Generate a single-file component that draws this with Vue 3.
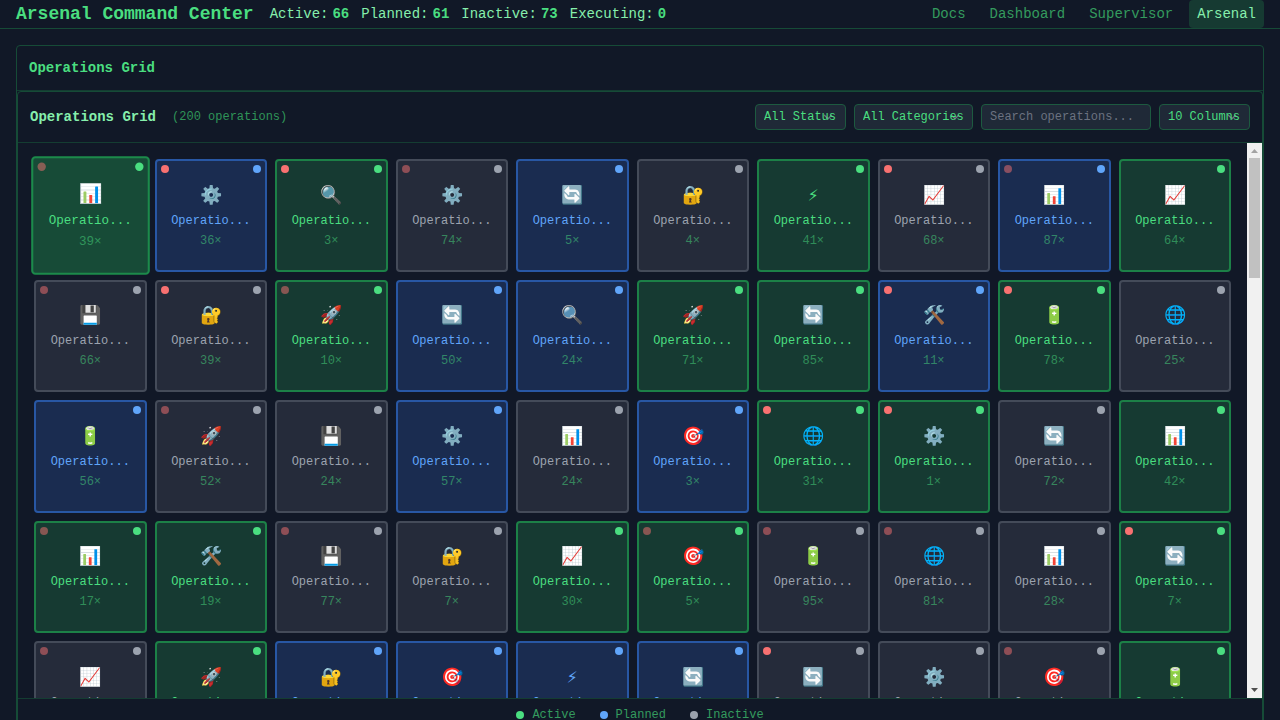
<script setup>
import { computed, ref } from 'vue'

const icons = {
  b: '📊', g: '⚙️', s: '🔍', r: '🔄', l: '🔐', z: '⚡', u: '📈',
  d: '💾', k: '🚀', t: '🛠️', y: '🔋', w: '🌐', o: '🎯'
}
const states = { a: 'active', p: 'planned', i: 'inactive' }
const alerts = { '-': '', h: 'high', m: 'muted' }

// Each entry: icon, state, alert level, run count
const rows = [
  'bam39 gph36 sah3 gim74 rp-5 li-4 za-41 uih68 bpm87 ua-64',
  'dim66 lih39 kam10 rp-50 sp-24 ka-71 ra-85 tph11 yah78 wi-25',
  'yp-56 kim52 di-24 gp-57 bi-24 op-3 wah31 gah1 ri-72 ba-42',
  'bam17 ta-19 dim77 li-7 ua-30 oam5 yim95 wim81 bi-28 rah7',
  'uim12 ka-33 lp-48 op-9 zp-62 rp-27 rih54 gi-18 oim70 ya-46'
]
const operations = rows.join(' ').split(' ').map((code, n) => ({
  id: n,
  label: 'Operatio...',
  icon: icons[code[0]],
  state: states[code[1]],
  alert: alerts[code[2]],
  runs: Number(code.slice(3))
}))

const status = ref('all')
const columns = ref(10)
const search = ref('')
const visible = computed(() =>
  operations.filter(op =>
    (status.value === 'all' || op.state === status.value) &&
    op.label.toLowerCase().includes(search.value.toLowerCase())
  )
)

const stats = [
  ['Active', 66], ['Planned', 61], ['Inactive', 73], ['Executing', 0]
]
const links = ['Docs', 'Dashboard', 'Supervisor', 'Arsenal']
</script>

<template>
  <div class="app">
    <header class="topbar">
      <h1>Arsenal Command Center</h1>
      <div class="stats">
        <span v-for="[name, value] in stats" :key="name" class="stat">
          <span>{{ name }}:</span><b>{{ value }}</b>
        </span>
      </div>
      <nav>
        <a v-for="link in links" :key="link" href="#" :class="{ current: link === 'Arsenal' }">{{ link }}</a>
      </nav>
    </header>

    <main>
      <section class="panel">
        <h2 class="panel-title">Operations Grid</h2>
        <div class="board">
          <div class="toolbar">
            <h3>Operations Grid</h3>
            <span class="total">(200 operations)</span>
            <div class="filters">
              <select v-model="status" aria-label="Status">
                <option value="all">All Status</option>
                <option value="active">Active</option>
                <option value="planned">Planned</option>
                <option value="inactive">Inactive</option>
              </select>
              <select aria-label="Category">
                <option>All Categories</option>
              </select>
              <input v-model="search" type="text" placeholder="Search operations..." aria-label="Search operations">
              <select v-model="columns" aria-label="Columns">
                <option :value="10">10 Columns</option>
              </select>
            </div>
          </div>

          <div class="viewport">
            <div class="scroller">
              <div class="grid">
                <button
                  v-for="op in visible"
                  :key="op.id"
                  type="button"
                  class="card"
                  :class="[op.state, { focused: op.id === 0 }]"
                >
                  <span v-if="op.alert" class="dot alert" :class="op.alert"></span>
                  <span class="dot state"></span>
                  <span class="icon">{{ op.icon }}</span>
                  <span class="name">{{ op.label }}</span>
                  <span class="runs">{{ op.runs }}×</span>
                </button>
              </div>
            </div>
            <div class="rail" aria-hidden="true">
              <svg class="arrow" viewBox="0 0 15 15"><path d="M4 10L7.500 6L11 10Z" fill="#a3a3a3" /></svg>
              <div class="track"><div class="thumb"></div></div>
              <svg class="arrow" viewBox="0 0 15 15"><path d="M4 5L11 5L7.500 9Z" fill="#505050" /></svg>
            </div>
          </div>

          <footer class="legend">
            <span class="active"><i class="dot"></i>Active</span>
            <span class="planned"><i class="dot"></i>Planned</span>
            <span class="inactive"><i class="dot"></i>Inactive</span>
          </footer>
        </div>
      </section>
    </main>
  </div>
</template>

<style>
body {
  margin: 0;
  background: #111827;
}
</style>

<style scoped>
* {
  box-sizing: border-box;
}
.app {
  display: flex;
  flex-direction: column;
  height: 100vh;
  overflow: hidden;
  background: #111827;
  color: #4ade80;
  font-family: "Liberation Mono", monospace;
  font-size: 14px;
  line-height: 20px;
}
h1, h2, h3 {
  margin: 0;
  font-weight: 700;
}
.topbar {
  display: flex;
  align-items: center;
  flex-shrink: 0;
  padding: 0 16px;
  border-bottom: 1px solid #164b37;
}
h1 {
  font-size: 18px;
  line-height: 28px;
}
.stats {
  display: flex;
  gap: 12px;
  margin-left: 16px;
  color: #86efac;
}
.stat {
  display: flex;
  gap: 4px;
}
.stat b {
  color: #4ade80;
}
nav {
  display: flex;
  gap: 8px;
  margin-left: auto;
}
nav a {
  padding: 4px 8px;
  border-radius: 4px;
  color: #349b5e;
  text-decoration: none;
}
nav a.current {
  background: #163a32;
  color: #86efac;
}
main {
  flex: 1;
  min-height: 0;
  padding: 16px;
}
.panel {
  border: 1px solid #164b37;
  border-radius: 4px;
}
.panel-title {
  padding: 12px;
  border-bottom: 1px solid #143d32;
  font-size: 14px;
}
.board {
  display: flex;
  flex-direction: column;
  height: calc(100vh - 79px);
  border: 1px solid #164b37;
  border-radius: 4px;
}
.toolbar {
  display: flex;
  align-items: center;
  flex-shrink: 0;
  padding: 12px;
  border-bottom: 1px solid #143d32;
}
h3 {
  color: #86efac;
  font-size: 14px;
}
.total {
  margin-left: 16px;
  color: #2f9558;
  font-size: 12px;
  line-height: 16px;
}
.filters {
  display: flex;
  gap: 8px;
  margin-left: auto;
}
select, input {
  height: 26px;
  margin: 0;
  padding: 4px 8px;
  border: 1px solid #1d5a40;
  border-radius: 4px;
  outline: none;
  background-color: #1f2937;
  color: #4ade80;
  font: 12px/16px "Liberation Mono", monospace;
}
select {
  appearance: none;
  background-image: url("data:image/svg+xml,%3Csvg xmlns='http://www.w3.org/2000/svg' viewBox='0 0 20 20' fill='none'%3E%3Cpath stroke='%236b7280' stroke-linecap='round' stroke-linejoin='round' stroke-width='1.5' d='M6 8l4 4 4-4'/%3E%3C/svg%3E");
  background-position: right 8px center;
  background-repeat: no-repeat;
  background-size: 18px 18px;
}
input {
  width: 170px;
}
input::placeholder {
  color: #6b7280;
  opacity: 1;
}
.viewport {
  display: flex;
  flex: 1;
  min-height: 0;
}
.scroller {
  flex: 1;
  min-width: 0;
  overflow-y: auto;
  scrollbar-width: none;
}
.rail {
  display: flex;
  flex-direction: column;
  width: 15px;
  background: #f1f1f1;
}
.arrow {
  display: block;
  width: 15px;
  height: 15px;
}
.track {
  flex: 1;
  padding: 0 2px;
}
.thumb {
  height: 120px;
  background: #c1c1c1;
}
.grid {
  display: grid;
  grid-template-columns: repeat(10, minmax(0, 1fr));
  gap: 8px;
  padding: 16px;
}
.card {
  position: relative;
  display: flex;
  flex-direction: column;
  align-items: center;
  justify-content: center;
  aspect-ratio: 1;
  min-width: 0;
  padding: 8px;
  border: 2px solid;
  border-radius: 4px;
  font: 12px/16px "Liberation Mono", monospace;
}
.card.active {
  border-color: #1c8047;
  background: #163a32;
  color: #4ade80;
}
.card.planned {
  border-color: #2857a4;
  background: #1a2c50;
  color: #60a5fa;
}
.card.inactive {
  border-color: #444b59;
  background: #252b3a;
  color: #9ca3af;
}
.card.focused {
  z-index: 1;
  border-color: #1c8a4b;
  background: #174b37;
  transform: scale(1.05);
}
.icon {
  margin-bottom: 3px;
  font-size: 18px;
  line-height: 28px;
}
.name {
  margin-bottom: 4px;
}
.runs {
  color: #4ade80;
  opacity: 0.5;
}
.dot {
  width: 8px;
  height: 8px;
  border-radius: 50%;
}
.card .dot {
  position: absolute;
  top: 4px;
}
.dot.state {
  right: 4px;
}
.dot.alert {
  left: 4px;
  background: #f87171;
}
.dot.alert.muted {
  opacity: 0.5;
}
.active .dot:not(.alert) {
  background: #4ade80;
}
.planned .dot:not(.alert) {
  background: #60a5fa;
}
.inactive .dot:not(.alert) {
  background: #9ca3af;
}
.legend {
  display: flex;
  flex-shrink: 0;
  justify-content: center;
  gap: 24px;
  padding: 8px;
  border-top: 1px solid #143d32;
  color: #349b5e;
  font-size: 12px;
  line-height: 16px;
}
.legend span {
  display: flex;
  align-items: center;
  gap: 8px;
}
</style>
